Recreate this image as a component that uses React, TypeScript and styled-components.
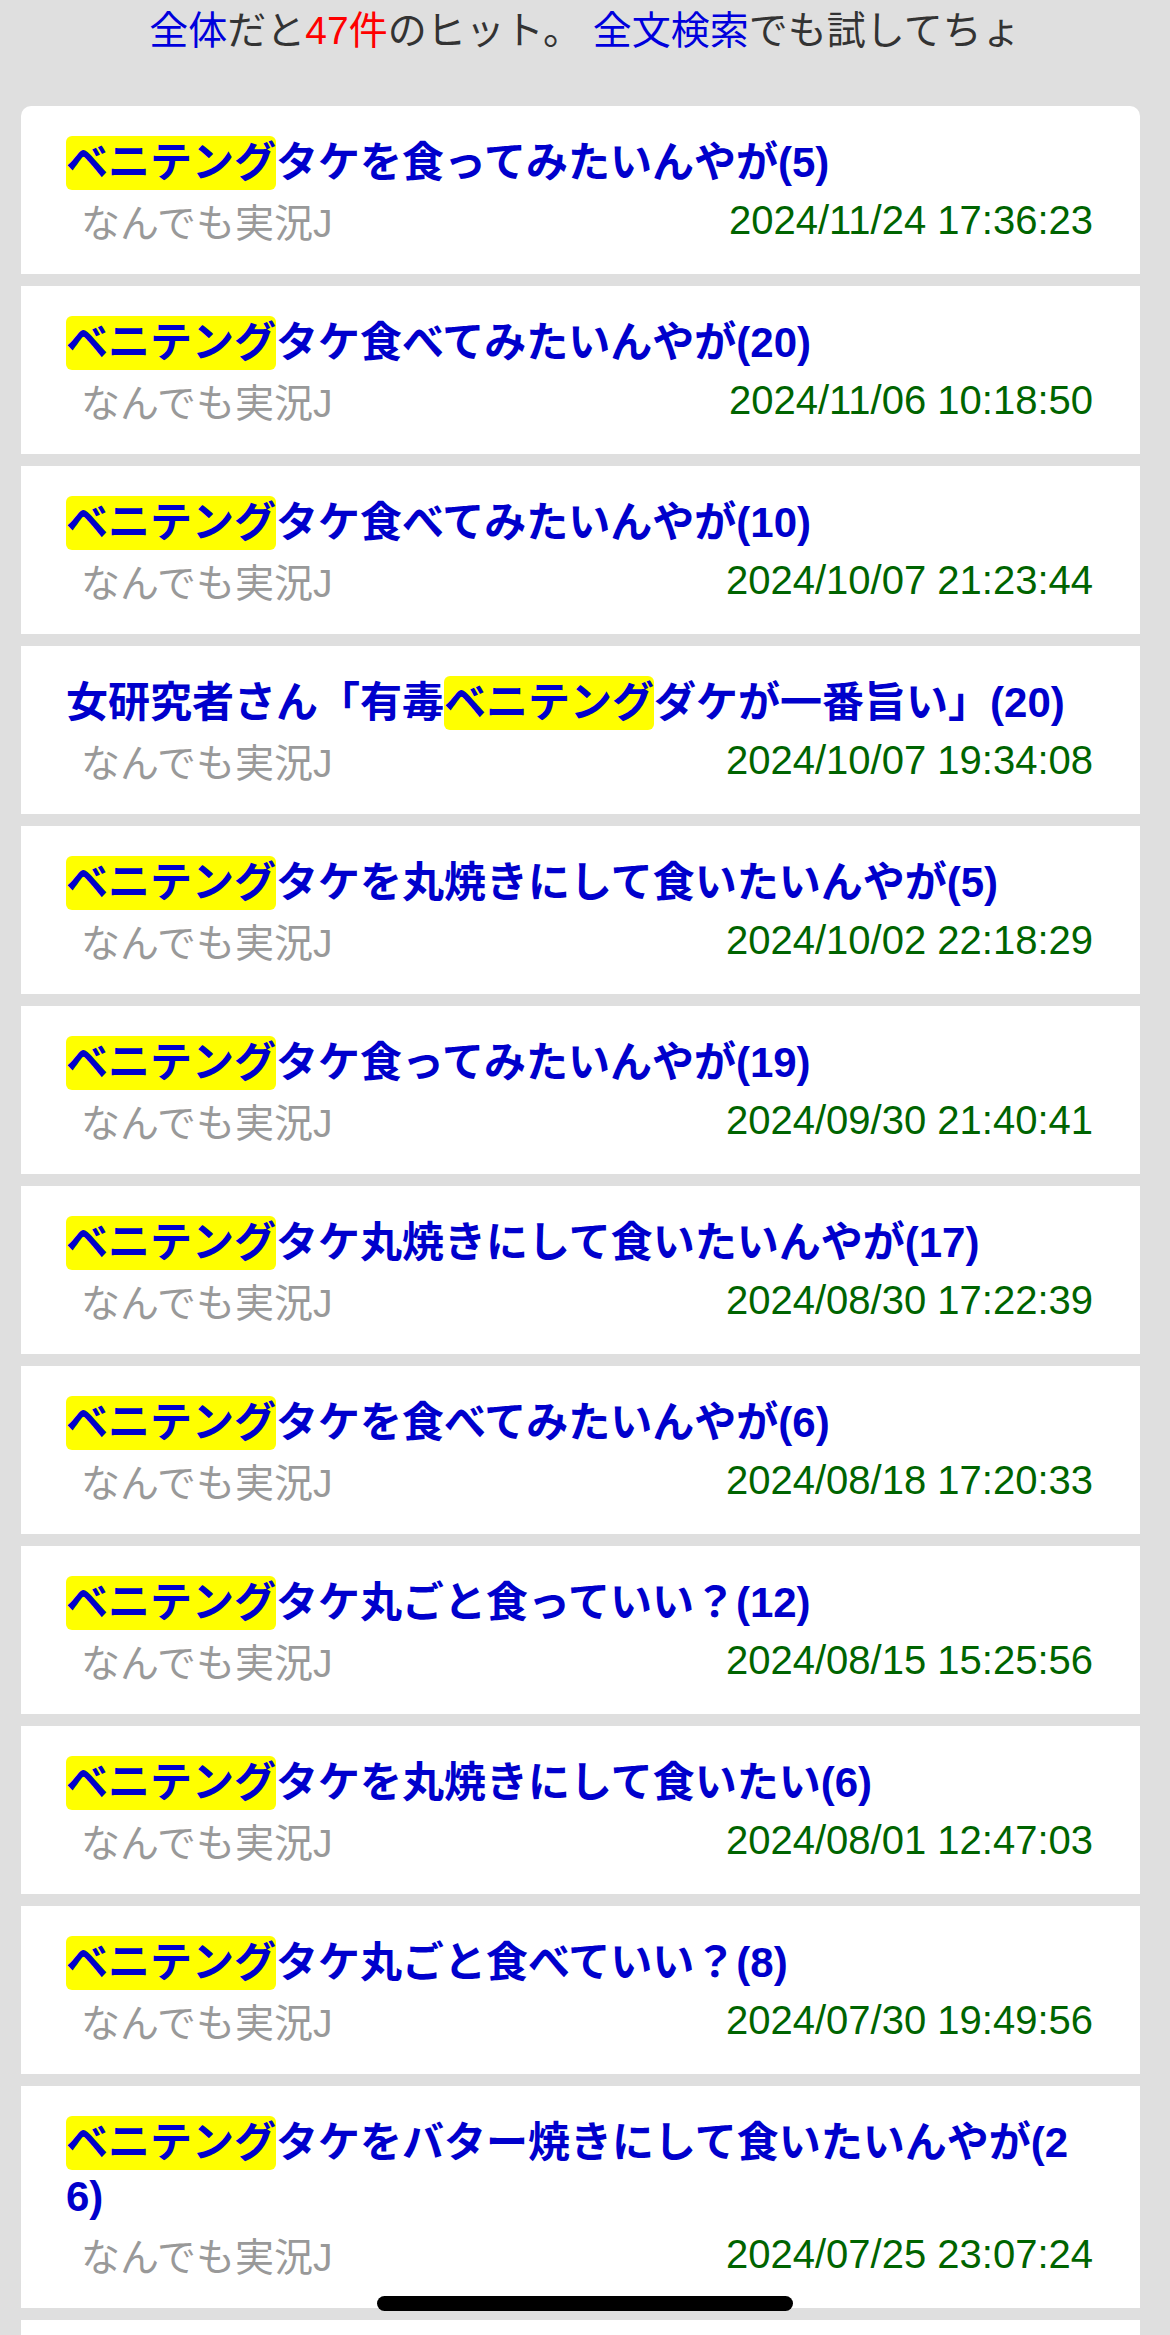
import React from "react";
import styled, { createGlobalStyle } from "styled-components";

const GlobalStyle = createGlobalStyle`
  html, body {
    margin: 0;
    padding: 0;
    background-color: #dfdfdf;
    font-family: "Liberation Sans", "Noto Sans CJK JP", sans-serif;
  }
`;

interface Thread {
  pre: string;
  hit: string;
  post: string;
  board: string;
  date: string;
}

const threads: Thread[] = [
  { pre: "", hit: "ベニテング", post: "タケを食ってみたいんやが(5)", board: "なんでも実況J", date: "2024/11/24 17:36:23" },
  { pre: "", hit: "ベニテング", post: "タケ食べてみたいんやが(20)", board: "なんでも実況J", date: "2024/11/06 10:18:50" },
  { pre: "", hit: "ベニテング", post: "タケ食べてみたいんやが(10)", board: "なんでも実況J", date: "2024/10/07 21:23:44" },
  { pre: "女研究者さん「有毒", hit: "ベニテング", post: "ダケが一番旨い」(20)", board: "なんでも実況J", date: "2024/10/07 19:34:08" },
  { pre: "", hit: "ベニテング", post: "タケを丸焼きにして食いたいんやが(5)", board: "なんでも実況J", date: "2024/10/02 22:18:29" },
  { pre: "", hit: "ベニテング", post: "タケ食ってみたいんやが(19)", board: "なんでも実況J", date: "2024/09/30 21:40:41" },
  { pre: "", hit: "ベニテング", post: "タケ丸焼きにして食いたいんやが(17)", board: "なんでも実況J", date: "2024/08/30 17:22:39" },
  { pre: "", hit: "ベニテング", post: "タケを食べてみたいんやが(6)", board: "なんでも実況J", date: "2024/08/18 17:20:33" },
  { pre: "", hit: "ベニテング", post: "タケ丸ごと食っていい？(12)", board: "なんでも実況J", date: "2024/08/15 15:25:56" },
  { pre: "", hit: "ベニテング", post: "タケを丸焼きにして食いたい(6)", board: "なんでも実況J", date: "2024/08/01 12:47:03" },
  { pre: "", hit: "ベニテング", post: "タケ丸ごと食べていい？(8)", board: "なんでも実況J", date: "2024/07/30 19:49:56" },
  { pre: "", hit: "ベニテング", post: "タケをバター焼きにして食いたいんやが(26)", board: "なんでも実況J", date: "2024/07/25 23:07:24" },
  { pre: "", hit: "ベニテング", post: "タケって美味いんか？(4)", board: "なんでも実況J", date: "2024/07/12 08:15:42" },
];

const Page = styled.div`
  padding-bottom: 40px;
`;

const Summary = styled.p`
  margin: 0 0 44px;
  height: 62px;
  line-height: 62px;
  text-align: center;
  font-size: 39px;
  color: #333333;
`;

const Link = styled.a`
  color: #0000dd;
  text-decoration: none;
`;

const Count = styled.span`
  color: #ff0000;
`;

const List = styled.ul`
  list-style: none;
  margin: 0 30px 0 21px;
  padding: 0;
`;

const Card = styled.li`
  background-color: #ffffff;
  padding: 30px 47px 0 45px;
  margin-bottom: 12px;

  &:first-child {
    border-radius: 10px 10px 0 0;
  }
`;

const Title = styled.a`
  display: block;
  padding-right: 20px;
  font-size: 42px;
  font-weight: 700;
  line-height: 54px;
  color: #0000cc;
  text-decoration: none;
  word-break: break-all;
`;

const Hit = styled.span`
  display: inline-block;
  height: 54px;
  background-color: #ffff00;
  border-radius: 6px;
  vertical-align: top;
`;

const Meta = styled.div`
  display: flex;
  justify-content: space-between;
  align-items: center;
  height: 52px;
  padding: 4px 0 28px;
  font-size: 39px;
`;

const Board = styled.span`
  margin-left: 15px;
  color: #999999;
`;

const Stamp = styled.span`
  font-size: 40px;
  color: #006400;
`;

const HomeBar = styled.div`
  position: fixed;
  left: 50%;
  bottom: 24px;
  width: 416px;
  height: 15px;
  margin-left: -208px;
  border-radius: 8px;
  background-color: #000000;
`;

export default function App() {
  return (
    <Page>
      <GlobalStyle />
      <Summary>
        <Link href="#">全体</Link>だと<Count>47件</Count>のヒット。 <Link href="#">全文検索</Link>でも試してちょ
      </Summary>
      <List>
        {threads.map((t, i) => (
          <Card key={i}>
            <Title href="#">
              {t.pre}
              <Hit>{t.hit}</Hit>
              {t.post}
            </Title>
            <Meta>
              <Board>{t.board}</Board>
              <Stamp>{t.date}</Stamp>
            </Meta>
          </Card>
        ))}
      </List>
      <HomeBar />
    </Page>
  );
}
